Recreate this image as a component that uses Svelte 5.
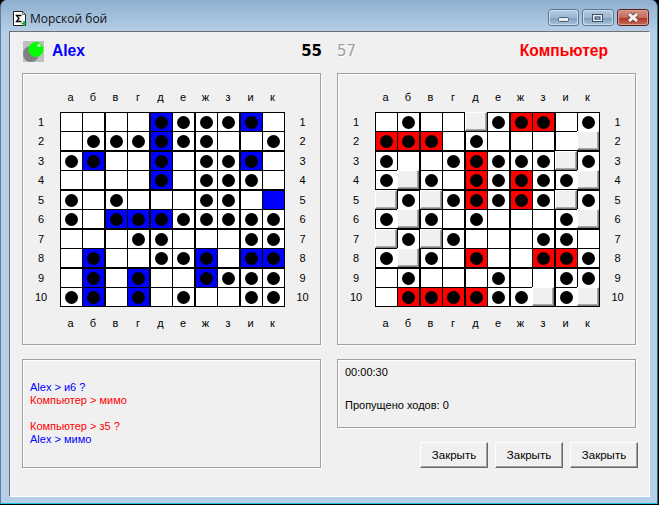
<script>
	// . empty, o shot, B/R hit deck, b deck not shot, g closed cell
	const myBoard = [
		'....BoooB.', '.oooBoo..o', 'oB..B.ooB.', '....B.ooo.', 'o.o...oo.b',
		'o.BBBooooo', '...oo...oo', '.B..ooB.BB', '.B.B..Booo', 'oB.B.o..oo'
	];
	const enemyBoard = [
		'.o..goRR.o', 'RRR.o....g', 'o..oRooogo', 'ogo.RoRoog', 'gogoRoRogo',
		'ogo.o...og', 'gogo...oo.', 'ogo.R..RRo', '.o...o..oo', '.RRRRoogog'
	];
	const letters = ['а', 'б', 'в', 'г', 'д', 'е', 'ж', 'з', 'и', 'к'];
	const numbers = [1, 2, 3, 4, 5, 6, 7, 8, 9, 10];
	const boards = [myBoard, enemyBoard];
</script>

{#snippet letterRow(bottom)}
	<div></div>
	<div class="letters" class:bottom>
		{#each letters as l}<span>{l}</span>{/each}
	</div>
	<div></div>
{/snippet}

{#snippet numberCol(first)}
	<div class="numbers" class:first>
		{#each numbers as n}<span>{n}</span>{/each}
	</div>
{/snippet}

<div class="window">
	<div class="titlebar">
		<svg class="app-icon" viewBox="0 0 16 16" width="16" height="16">
			<path d="M1.5.5h9l3 3v11h-12z" fill="#fff" stroke="#222" />
			<path d="M10.5.5v3h3z" fill="#f5ecb0" stroke="#222" stroke-width=".6" />
			<path d="M9.5 4.5h-5l2.5 3-2.5 3h5" fill="none" stroke="#000" stroke-width="1.3" />
			<path d="M12 10v5M9.5 12.5h5" stroke="#18a030" stroke-width="1.6" />
		</svg>
		<span class="title">Морской бой</span>
		<div class="controls">
			<div class="ctl">
				<svg viewBox="0 0 29 15" width="29" height="15"><rect x="9.5" y="7.5" width="10" height="4" rx="1" fill="#e8edf2" stroke="#4a5c70" /></svg>
			</div>
			<div class="ctl max">
				<svg viewBox="0 0 30 15" width="30" height="15"><rect x="9.5" y="4.5" width="10" height="7" fill="none" stroke="#3c4e62" /><rect x="10.5" y="5.5" width="8" height="5" fill="none" stroke="#eef2f6" /><rect x="12.5" y="7" width="4" height="2" fill="#b4c4d4" stroke="#3c4e62" stroke-width=".8" /></svg>
			</div>
			<div class="ctl close">
				<svg viewBox="0 0 30 15" width="30" height="15"><path d="M11 4l8 7M19 4l-8 7" stroke="#5a2a24" stroke-width="4.6" /><path d="M11 4l8 7M19 4l-8 7" stroke="#f4f0ee" stroke-width="3" /></svg>
			</div>
		</div>
	</div>

	<div class="client">
		<div class="columns">
			<div class="head">
				<div class="player">
					<svg class="led" viewBox="0 0 21 21" width="21" height="21">
						<rect width="21" height="21" fill="#c0c0c0" />
						<circle cx="8" cy="13" r="8" fill="#808080" />
						<circle cx="13" cy="8.5" r="7.5" fill="#00ff00" />
						<circle cx="16" cy="4.5" r="1.6" fill="#e8ffe8" />
					</svg>
					<span class="name blue">Alex</span>
				</div>
				<span class="score">55</span>
			</div>
			<div class="head right">
				<span class="score off">57</span>
				<span class="name red">Компьютер</span>
			</div>

			{#each boards as board}
				<div class="panel field">
					{@render letterRow(false)}
					{@render numberCol(true)}
					<div class="board">
						{#each board as row, r}
							{#each row.split('') as c, i}
								<div
									class="cell"
									class:col-end={i % 2 === 1 && i < 9}
									class:row-end={r % 2 === 1 && r < 9}
									class:blue-cell={c === 'B' || c === 'b'}
									class:red-cell={c === 'R'}
									class:closed={c === 'g'}
									class:dot={c === 'o' || c === 'B' || c === 'R'}
								></div>
							{/each}
						{/each}
					</div>
					{@render numberCol(false)}
					{@render letterRow(true)}
				</div>
			{/each}

			<div class="panel log">
				<p class="blue-text">Alex &gt; и6 ?</p>
				<p class="red-text">Компьютер &gt; мимо</p>
				<p class="red-text spaced">Компьютер &gt; з5 ?</p>
				<p class="blue-text">Alex &gt; мимо</p>
			</div>

			<div class="side">
				<div class="panel info">
					<p>00:00:30</p>
					<p>Пропущено ходов: 0</p>
				</div>
				<div class="buttons">
					<button>Закрыть</button>
					<button>Закрыть</button>
					<button>Закрыть</button>
				</div>
			</div>
		</div>
	</div>
</div>

<style>
	:global(body) {
		background: #000;
		font-family: "Liberation Sans", sans-serif;
	}

	.window {
		box-sizing: border-box;
		width: 658px;
		height: 504px;
		padding: 0 7px 6px 8px;
		background: #b6cfe9;
		border-left: 1px solid #5f7f9f;
		border-right: 1px solid #3a6a80;
		border-bottom: 1px solid #1fc4d8;
		border-radius: 7px 7px 0 0;
		background-image: linear-gradient(#8fafcf 0, #b6cfe9 32px);
	}

	.titlebar {
		display: flex;
		align-items: flex-start;
		height: 31px;
	}

	.app-icon {
		margin: 11px 0 0 3px;
	}

	.title {
		margin: 10px 0 0 2px;
		font-family: "Open Sans", "Noto Sans", sans-serif;
		font-size: 12px;
		line-height: 17px;
		color: #111;
	}

	.controls {
		display: flex;
		gap: 5px;
		margin: 10px 2px 0 auto;
	}

	.ctl {
		width: 29px;
		height: 15px;
		border-radius: 3px;
		box-shadow: 0 0 0 1px #5d7690, inset 0 0 0 1px #c8dcee;
		background: linear-gradient(#b4cce2 0, #9db8d2 50%, #7d9cbc 52%, #a9c4dc 100%);
	}

	.max {
		width: 30px;
	}

	.close {
		width: 30px;
		box-shadow: 0 0 0 1px #58211c, inset 0 0 0 1px #dc9c90;
		background: linear-gradient(#d59488 0, #c46a5c 50%, #ac3222 52%, #cb6a58 100%);
	}

	.ctl svg {
		display: block;
	}

	.client {
		box-sizing: border-box;
		height: 466px;
		padding: 7px 0 0 12px;
		background: #f0f0f0;
		border-top: 1px solid #6e6e6e;
		border-left: 1px solid #6e6e6e;
		border-right: 1px solid #fff;
		border-bottom: 1px solid #fff;
	}

	.columns {
		display: grid;
		grid-template-columns: 299px 299px;
		grid-template-rows: 20px 272px 109px;
		column-gap: 16px;
		row-gap: 14px;
	}

	.head {
		display: flex;
		align-items: center;
		justify-content: space-between;
		height: 23px;
	}

	.head.right {
		padding-right: 28px;
	}

	.player {
		display: flex;
		align-items: center;
		gap: 8px;
		padding-left: 1px;
	}

	.led {
		display: block;
		margin-top: 1px;
	}

	.name {
		font-weight: 700;
		font-size: 15.6px;
	}

	.blue {
		color: #0000ff;
	}

	.red {
		color: #ff0000;
	}

	.score {
		font-family: "DejaVu Sans", sans-serif;
		font-weight: 700;
		font-size: 15px;
		color: #000;
		margin-right: -1px;
	}

	.score.off {
		color: #a0a0a0;
		font-weight: 400;
		text-shadow: 1px 1px 0 #fff;
	}

	.panel {
		box-sizing: border-box;
		border: 1px solid #a0a0a0;
		box-shadow: 1px 1px 0 #fff, inset 1px 1px 0 #fff;
		font-size: 11px;
		color: #000;
	}

	p {
		margin: 0;
		line-height: 13px;
	}

	.field {
		display: grid;
		grid-template-columns: 37px 225px 1fr;
		grid-template-rows: 38px 195px 1fr;
	}

	.letters {
		display: grid;
		grid-template-columns: repeat(4, 21px 22px) 21px 21px;
		column-gap: 1px;
		padding: 0 2px 8px 0;
		align-items: end;
	}

	.letters.bottom {
		padding: 9px 2px 0 0;
		align-items: start;
	}

	.letters span {
		line-height: 14px;
		text-align: center;
	}

	.numbers {
		display: grid;
		grid-template-rows: repeat(4, 18px 19px) 18px 18px;
		row-gap: 1px;
		padding: 1px 0;
		align-items: center;
		justify-items: center;
	}

	.numbers.first {
		padding-right: 1px;
	}

	.numbers span {
		line-height: 18px;
		margin-top: -1px;
	}

	.board {
		display: grid;
		grid-template-columns: repeat(4, 21px 22px) 21px 21px;
		grid-template-rows: repeat(4, 18px 19px) 18px 18px;
		gap: 1px;
		padding: 1px;
		background: #000;
	}

	.cell {
		background: #fff;
		display: flex;
		align-items: center;
		justify-content: center;
	}

	.col-end {
		margin-right: 1px;
	}

	.row-end {
		margin-bottom: 1px;
	}

	.blue-cell {
		background: #0000ff;
	}

	.red-cell {
		background: #ff0000;
	}

	.closed {
		box-sizing: border-box;
		margin-top: -1px;
		margin-left: -1px;
		background: #f0f0f0;
		border-top: 1px solid #fff;
		border-left: 1px solid #fff;
		border-right: 1px solid #808080;
		border-bottom: 1px solid #808080;
		box-shadow: inset -1px -1px 0 #a8a8a8;
	}

	.dot::after {
		content: "";
		width: 13px;
		height: 13px;
		border-radius: 50%;
		background: #000;
	}

	.log {
		padding: 21px 7px 0;
	}

	.spaced {
		margin-top: 13px;
	}

	.blue-text {
		color: #0000ff;
	}

	.red-text {
		color: #ff0000;
	}

	.side {
		display: flex;
		flex-direction: column;
		gap: 14px;
	}

	.info {
		height: 70px;
		padding: 6px 7px 0;
		display: flex;
		flex-direction: column;
		gap: 20px;
	}

	.buttons {
		display: flex;
		justify-content: flex-end;
		gap: 7px;
		margin-right: -2px;
	}

	button {
		box-sizing: border-box;
		width: 68px;
		height: 26px;
		padding: 0;
		background: #f0f0f0;
		border: 0;
		border-top: 1px solid #fff;
		border-left: 1px solid #fff;
		border-right: 1px solid #696969;
		border-bottom: 1px solid #696969;
		box-shadow: inset -1px -1px 0 #a0a0a0;
		font-family: inherit;
		font-size: 11.5px;
		color: #000;
	}
</style>
